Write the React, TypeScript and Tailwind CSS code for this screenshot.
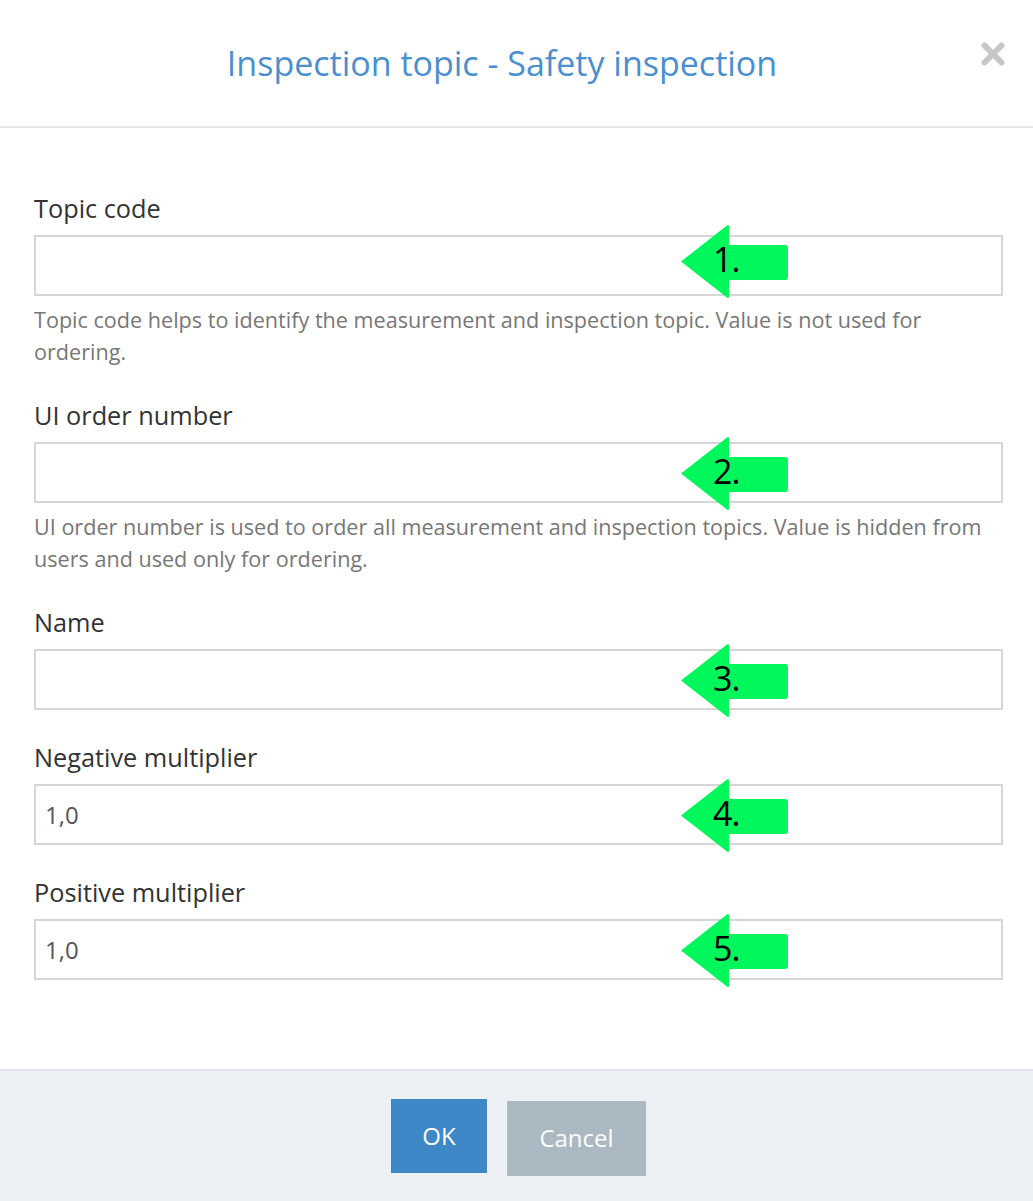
import { X } from 'lucide-react';

type Field = {
  label: string;
  value?: string;
  help?: string;
  mark: string;
  lift?: boolean;
};

const fields: Field[] = [
  {
    label: 'Topic code',
    mark: '1.',
    lift: true,
    help: 'Topic code helps to identify the measurement and inspection topic. Value is not used for ordering.',
  },
  {
    label: 'UI order number',
    mark: '2.',
    help: 'UI order number is used to order all measurement and inspection topics. Value is hidden from users and used only for ordering.',
  },
  { label: 'Name', mark: '3.' },
  { label: 'Negative multiplier', value: '1,0', mark: '4.' },
  { label: 'Positive multiplier', value: '1,0', mark: '5.' },
];

// green callout arrow pointing left, with a number on it
function Callout({ mark, lift }: { mark: string; lift?: boolean }) {
  return (
    <div
      className={`pointer-events-none absolute left-[646px] h-[75px] w-[108px] ${
        lift ? 'top-[calc(50%-42px)]' : 'top-[calc(50%-37px)]'
      }`}
    >
      <svg viewBox="0 0 108 75" className="absolute inset-0 h-full w-full">
        <path
          d="M1 37.5 L47 1.5 Q49 0 49 2.5 L49 21 L105 21 Q108 21 108 24 L108 53 Q108 56 105 56 L49 56 L49 72.5 Q49 75 47 73.5 Z"
          fill="#00f75c"
        />
      </svg>
      <span className="absolute left-[33px] top-[calc(50%-2px)] -translate-y-1/2 text-[34px] leading-none tracking-[-1px] text-black [font-family:'Open_Sans',sans-serif]">
        {mark}
      </span>
    </div>
  );
}

export default function App() {
  return (
    <div className="flex min-h-[1201px] w-[1033px] flex-col bg-white [font-family:'Open_Sans',sans-serif]">
      <div className="relative flex h-[128px] items-center justify-center border-b-2 border-[#e6e6e6] pl-[34px] pr-[63px]">
        <h1 className="text-[34px] leading-[46px] text-[#4a8fcf]">Inspection topic - Safety inspection</h1>
        <button className="absolute right-[23px] top-[37px] text-[#c6c6c6]">
          <X className="h-[34px] w-[34px]" strokeWidth={4.2} />
        </button>
      </div>

      <div className="flex flex-1 flex-col gap-[29px] pb-[88px] pl-[34px] pr-[30px] pt-[62px]">
        {fields.map((f) => (
          <div key={f.label} className="flex flex-col">
            <label className="mb-[9px] text-[25.3px] leading-[36px] text-[#333]">{f.label}</label>
            <div className="relative">
              <input
                type="text"
                defaultValue={f.value}
                className="h-[61px] w-full border-2 border-[#d6d6d6] px-[9px] text-[24px] text-[#555] outline-none"
              />
              <Callout mark={f.mark} lift={f.lift} />
            </div>
            {f.help && (
              <p className="mt-[8px] text-[21.6px] leading-[32px] text-[#777]">{f.help}</p>
            )}
          </div>
        ))}
      </div>

      <div className="flex h-[132px] items-center justify-center gap-[20px] border-t-2 border-[#e2e6ec] bg-[#edf0f5] pl-[4px]">
        <button className="h-[74px] w-[96px] bg-[#3e88c8] text-[24px] text-white">OK</button>
        <button className="mt-[4px] h-[75px] w-[139px] bg-[#abb9c3] text-[24px] text-white">Cancel</button>
      </div>
    </div>
  );
}
